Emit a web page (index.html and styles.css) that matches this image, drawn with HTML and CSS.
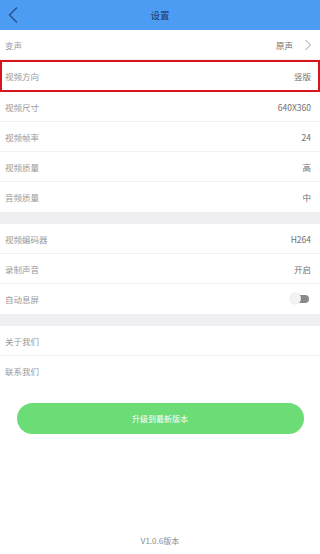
FILE: index.html
```html
<!DOCTYPE html>
<html lang="zh">
<head>
<meta charset="utf-8">
<link rel="stylesheet" href="styles.css">
</head>
<body>
<div class="page">
  <header class="topbar">
    <svg class="back" width="12" height="18" viewBox="0 0 12 18"><path d="M10 1.5 L2.5 9 L10 16.5" fill="none" stroke="#2b4d86" stroke-width="1.3"/></svg>
    <div class="title">设置</div>
  </header>
  <section class="group">
    <div class="row"><span class="label">变声</span><span class="value">原声<svg class="chev" width="8" height="12" viewBox="0 0 8 12"><path d="M1.5 1 L6.5 6 L1.5 11" fill="none" stroke="#9a9a9a" stroke-width="1"/></svg></span></div>
    <div class="row marked"><span class="label">视频方向</span><span class="value">竖版</span></div>
    <div class="row"><span class="label">视频尺寸</span><span class="value">640X360</span></div>
    <div class="row"><span class="label">视频帧率</span><span class="value">24</span></div>
    <div class="row"><span class="label">视频质量</span><span class="value">高</span></div>
    <div class="row"><span class="label">音频质量</span><span class="value">中</span></div>
  </section>
  <div class="gap"></div>
  <section class="group">
    <div class="row"><span class="label">视频编码器</span><span class="value">H264</span></div>
    <div class="row"><span class="label">录制声音</span><span class="value">开启</span></div>
    <div class="row"><span class="label">自动息屏</span><span class="switch"><span class="track"></span><span class="knob"></span></span></div>
  </section>
  <div class="gap"></div>
  <section class="group">
    <div class="row"><span class="label">关于我们</span></div>
    <div class="row"><span class="label">联系我们</span></div>
  </section>
  <div class="btnwrap"><button class="upgrade">升级到最新版本</button></div>
  <div class="version">V1.0.6版本</div>
</div>
</body>
</html>
```
FILE: styles.css
```css
html, body {
  margin: 0;
  padding: 0;
  background: #fff;
}
body {
  font-family: "Noto Sans CJK SC", "Noto Sans", sans-serif;
}
.page {
  min-height: 554px;
  display: flex;
  flex-direction: column;
}
.topbar {
  height: 30px;
  background: #4c9cf4;
  display: flex;
  align-items: center;
  justify-content: center;
  position: relative;
}
.back {
  position: absolute;
  left: 7px;
  top: 6px;
}
.title {
  font-size: 9.5px;
  color: #1f3a6a;
}
.group {
  display: flex;
  flex-direction: column;
}
.row {
  height: 30px;
  box-sizing: border-box;
  border-bottom: 1px solid #f1f1f3;
  display: flex;
  align-items: center;
  justify-content: space-between;
  padding: 0 9px 0 5px;
}
.row:last-child {
  border-bottom: none;
}
.row.marked {
  height: 32px;
  border: 2px solid #d8141c;
  padding: 0 7px 0 3px;
}
.label {
  font-size: 8.5px;
  color: #9a9a9a;
}
.value {
  font-size: 8.5px;
  color: #6f6f6f;
  display: flex;
  align-items: center;
}
.chev {
  margin-left: 11px;
  margin-right: -1px;
}
.gap {
  height: 12px;
  background: #efeff2;
}
.switch {
  position: relative;
  width: 20px;
  height: 12px;
  margin-right: 1px;
}
.track {
  position: absolute;
  left: 7px;
  top: 2px;
  width: 12px;
  height: 8px;
  border-radius: 4px;
  background: #8a8a8a;
}
.knob {
  position: absolute;
  left: 0;
  top: 0;
  width: 11px;
  height: 11px;
  border-radius: 50%;
  background: #f3f3f3;
  box-shadow: 0 0 1.5px rgba(0,0,0,0.2);
}
.btnwrap {
  display: flex;
  justify-content: center;
  margin-top: 17px;
}
.upgrade {
  width: 287px;
  height: 31px;
  border: none;
  border-radius: 16px;
  background: #6bdc76;
  color: #fff;
  font-family: "Noto Sans CJK SC", sans-serif;
  font-size: 8px;
  padding: 0;
}
.version {
  margin-top: auto;
  text-align: center;
  font-size: 8px;
  color: #8a8a8a;
  padding-bottom: 8px;
}
```
